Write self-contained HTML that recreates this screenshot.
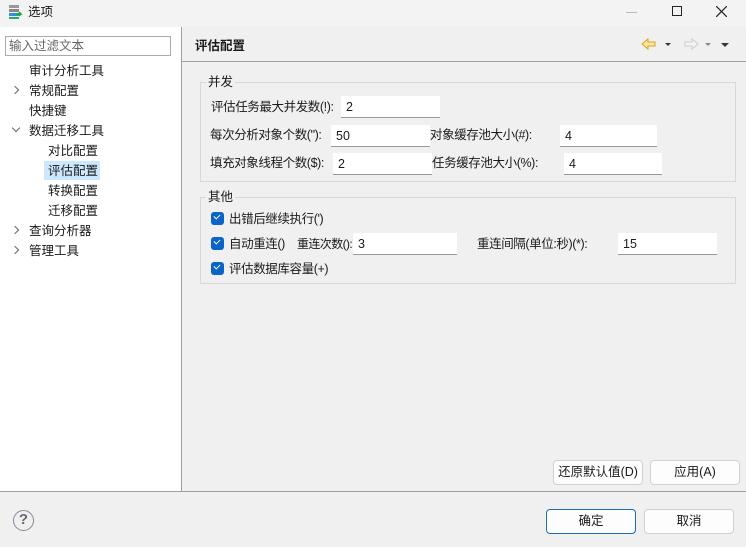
<!DOCTYPE html>
<html><head><meta charset="utf-8"><style>
*{box-sizing:border-box;margin:0;padding:0}
body{width:746px;height:547px;background:#f0f0f0;font-family:"Liberation Sans","Noto Sans CJK SC",sans-serif;font-size:12.5px;line-height:16px;color:#1a1a1a;position:relative;overflow:hidden}
.a{position:absolute;white-space:nowrap}
.l{letter-spacing:-0.4px}
.inp{position:absolute;background:#fff;border-bottom:1px solid #999;height:22px;padding:3px 5px;font-size:12.5px;line-height:16px}
.grp{position:absolute;border:1px solid #d8d8d8}
.gl{position:absolute;background:#f0f0f0;padding:0 2px;line-height:14px}
.cb{position:absolute;width:13px;height:13px;background:#0a64c8;border-radius:3px}
.cb:after{content:"";position:absolute;left:3px;top:2px;width:5px;height:3px;border-left:1.5px solid #fff;border-bottom:1.5px solid #fff;transform:rotate(-45deg)}
.btn{position:absolute;background:#fdfdfd;border:1px solid #d0d0d0;border-radius:4px;text-align:center;line-height:23px;font-size:12.5px}
.chev{position:absolute;width:6px;height:6px;border-right:1.2px solid #666;border-bottom:1.2px solid #666}
</style></head><body>
<div class="a" style="left:0;top:0;width:746px;height:27px;background:#f3f3f3"></div>
<svg class="a" style="left:7px;top:4px" width="16" height="16"><rect x="2" y="1" width="10" height="3" fill="#999"/><rect x="2" y="5" width="10" height="3" fill="#888"/><rect x="2" y="9" width="10" height="3" fill="#3a8ed8"/><rect x="2" y="13" width="10" height="2" fill="#2a7"/><path d="M9 10h5l-2-2M14 10l-2 2" stroke="#2a2" stroke-width="1.5" fill="none"/></svg>
<div class="a" style="left:28px;top:4px">选项</div>
<div class="a" style="left:626px;top:12px;width:11px;height:1px;background:#bbb"></div>
<div class="a" style="left:672px;top:6px;width:10px;height:10px;border:1.2px solid #222"></div>
<svg class="a" style="left:716px;top:6px" width="11" height="11"><path d="M0 0L11 11M11 0L0 11" stroke="#222" stroke-width="1.2"/></svg>

<div class="a" style="left:0;top:27px;width:181px;height:464px;background:#fff"></div>
<div class="a" style="left:181px;top:27px;width:1px;height:464px;background:#a0a0a0"></div>
<div class="a" style="left:0;top:491px;width:746px;height:1px;background:#a0a0a0"></div>
<div class="a" style="left:5px;top:36px;width:166px;height:20px;border:1px solid #aaa;padding:1px 3px;color:#666;font-size:12.5px">输入过滤文本</div>
<div class="a" style="left:44px;top:161px;width:56px;height:19px;background:#cce8ff"></div>
<div class="a" style="left:29px;top:63px">审计分析工具</div>
<div class="chev" style="left:12px;top:87px;transform:rotate(-45deg)"></div>
<div class="a" style="left:29px;top:83px">常规配置</div>
<div class="a" style="left:29px;top:103px">快捷键</div>
<div class="chev" style="left:13px;top:125px;transform:rotate(45deg)"></div>
<div class="a" style="left:29px;top:123px">数据迁移工具</div>
<div class="a" style="left:48px;top:143px">对比配置</div>
<div class="a" style="left:48px;top:163px">评估配置</div>
<div class="a" style="left:48px;top:183px">转换配置</div>
<div class="a" style="left:48px;top:203px">迁移配置</div>
<div class="chev" style="left:12px;top:247px;transform:rotate(-45deg)"></div>
<div class="chev" style="left:12px;top:227px;transform:rotate(-45deg)"></div>
<div class="a" style="left:29px;top:223px">查询分析器</div>
<div class="a" style="left:29px;top:243px">管理工具</div>

<div class="a" style="left:195px;top:38px;font-weight:bold">评估配置</div>
<div class="a" style="left:182px;top:61px;width:564px;height:1px;background:#a0a0a0"></div>
<svg class="a" style="left:640px;top:36px" width="100" height="16"><path d="M2 8l6-5v3h7v4h-7v3z" fill="#fbe6a0" stroke="#d9a521"/><path d="M25 7h6l-3 3z" fill="#333"/><path d="M58 8l-6-5v3h-7v4h7v3z" fill="#f4f4f4" stroke="#ccc"/><path d="M65 7h6l-3 3z" fill="#888"/><path d="M81 7h8l-4 4z" fill="#334"/></svg>

<div class="grp" style="left:200px;top:82px;width:536px;height:100px"></div>
<div class="gl" style="left:206px;top:75px">并发</div>
<div class="a l" style="left:211px;top:99px">评估任务最大并发数(!):</div>
<div class="inp" style="left:341px;top:96px;width:99px">2</div>
<div class="a l" style="left:210px;top:127px">每次分析对象个数("):</div>
<div class="inp" style="left:331px;top:125px;width:99px">50</div>
<div class="a l" style="left:430px;top:127px">对象缓存池大小(#):</div>
<div class="inp" style="left:560px;top:125px;width:97px">4</div>
<div class="a l" style="left:210px;top:155px">填充对象线程个数($):</div>
<div class="inp" style="left:333px;top:153px;width:99px">2</div>
<div class="a l" style="left:432px;top:155px">任务缓存池大小(%):</div>
<div class="inp" style="left:564px;top:153px;width:98px">4</div>

<div class="grp" style="left:200px;top:197px;width:536px;height:87px"></div>
<div class="gl" style="left:206px;top:190px">其他</div>
<div class="cb" style="left:211px;top:212px"></div>
<div class="a l" style="left:229px;top:211px">出错后继续执行(')</div>
<div class="cb" style="left:211px;top:237px"></div>
<div class="a l" style="left:229px;top:236px">自动重连()</div>
<div class="a l" style="left:297px;top:236px;font-size:12px;letter-spacing:-0.6px">重连次数():</div>
<div class="inp" style="left:353px;top:233px;width:104px">3</div>
<div class="a l" style="left:477px;top:236px">重连间隔(单位:秒)(*):</div>
<div class="inp" style="left:618px;top:233px;width:99px">15</div>
<div class="cb" style="left:211px;top:262px"></div>
<div class="a l" style="left:229px;top:261px">评估数据库容量(+)</div>

<div class="btn" style="left:553px;top:460px;width:90px;height:25px">还原默认值(D)</div>
<div class="btn" style="left:650px;top:460px;width:90px;height:25px">应用(A)</div>
<div class="a" style="left:13px;top:510px;width:21px;height:21px;border:1.5px solid #889;border-radius:50%;text-align:center;line-height:18px;font-weight:bold;color:#667;font-size:15px">?</div>
<div class="btn" style="left:546px;top:509px;width:90px;height:25px;border-color:#1a6fb8">确定</div>
<div class="btn" style="left:644px;top:509px;width:90px;height:25px">取消</div>
</body></html>
